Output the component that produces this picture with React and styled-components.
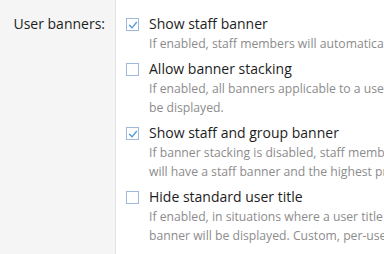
import React from "react"
import styled, { createGlobalStyle } from "styled-components"

const GlobalStyle = createGlobalStyle`
  body {
    margin: 0;
    background: #fff;
    font-family: "Open Sans", "Noto Sans", sans-serif;
  }
`

const FormRow = styled.div`
  display: flex;
  width: 384px;
  height: 254px;
  overflow: hidden;
`

const LabelCol = styled.div`
  width: 116px;
  flex-shrink: 0;
  background: #f5f5f5;
  border-right: 1px solid #e4e4e4;
  padding: 14px 10px 0 0;
  box-sizing: border-box;
  text-align: right;
  font-size: 14px;
  color: #1d1d1d;
`

const InputCol = styled.div`
  flex: 1;
  padding: 14px 0 0 10px;
  display: flex;
  flex-direction: column;
  gap: 6px;
`

const Option = styled.div`
  display: flex;
  gap: 10px;
  white-space: nowrap;
`

const Box = styled.span`
  width: 11px;
  height: 11px;
  margin-top: 4px;
  flex-shrink: 0;
  border: 1px solid #9dbadc;
  background: #fff;
  display: flex;
  align-items: center;
  justify-content: center;
`

const Texts = styled.div`
  display: flex;
  flex-direction: column;
`

const Title = styled.div`
  font-size: 14px;
  line-height: 20px;
  color: #1d1d1d;
`

const Hint = styled.div`
  font-size: 12.2px;
  line-height: 19px;
  color: #8c8c8c;
`

const Check = () => (
  <svg width="10" height="10" viewBox="0 0 10 10">
    <path d="M1.2 5 L4 7.8 L8.8 2" fill="none" stroke="#4a98e0" strokeWidth="1.3" />
  </svg>
)

const options = [
  {
    title: "Show staff banner",
    checked: true,
    hint: ["If enabled, staff members will automatically receive a staff banner."],
  },
  {
    title: "Allow banner stacking",
    checked: false,
    hint: ["If enabled, all banners applicable to a user will", "be displayed."],
  },
  {
    title: "Show staff and group banner",
    checked: true,
    hint: [
      "If banner stacking is disabled, staff members",
      "will have a staff banner and the highest priority group banner.",
    ],
  },
  {
    title: "Hide standard user title",
    checked: false,
    hint: [
      "If enabled, in situations where a user title",
      "banner will be displayed. Custom, per-user titles will still show.",
    ],
  },
]

export default function App() {
  return (
    <>
      <GlobalStyle />
      <FormRow>
        <LabelCol>User banners:</LabelCol>
        <InputCol>
          {options.map((o) => (
            <Option key={o.title}>
              <Box>{o.checked && <Check />}</Box>
              <Texts>
                <Title>{o.title}</Title>
                {o.hint.map((h) => (
                  <Hint key={h}>{h}</Hint>
                ))}
              </Texts>
            </Option>
          ))}
        </InputCol>
      </FormRow>
    </>
  )
}
